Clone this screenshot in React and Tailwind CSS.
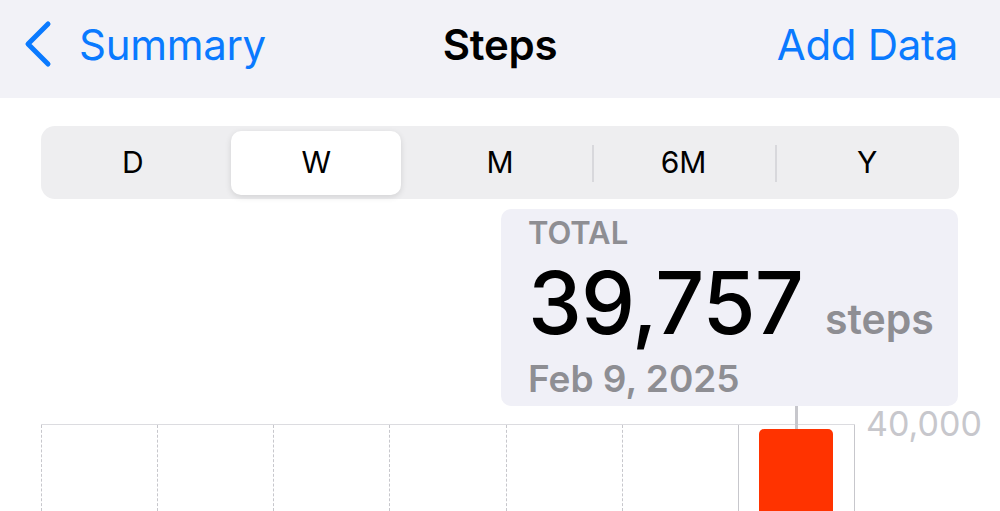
const tabs = ["D", "W", "M", "6M", "Y"]

function App(){
    const days = [0, 1, 2, 3, 4, 5, 6]

    return(
        <div className="w-[1000px] h-[511px] overflow-hidden bg-white flex flex-col" style={{fontFamily: "Inter, 'Liberation Sans', sans-serif"}}>
            {/* Nav bar */}
            <div className="h-[98px] shrink-0 bg-[#f2f2f7] flex items-center pl-[20px] pr-[42px] pb-[10px]">
                <div className="flex items-center text-[#0a7aff] w-[311px]">
                    <svg width="34" height="48" viewBox="0 0 34 48" className="shrink-0">
                        <path d="M28 4 L8 24 L28 44" fill="none" stroke="#0a7aff" strokeWidth="5" strokeLinecap="round" strokeLinejoin="round" />
                    </svg>
                    <span className="text-[42px] ml-[25px] tracking-[-0.3px]">Summary</span>
                </div>
                <div className="flex-1 text-center text-[42px] font-semibold text-black tracking-[-0.3px]">Steps</div>
                <div className="w-[289px] text-right text-[42px] text-[#0a7aff] tracking-[-0.3px]">Add Data</div>
            </div>

            {/* Segmented control */}
            <div className="mt-[28px] mx-[41px] h-[73px] shrink-0 bg-[#eeeef0] rounded-[14px] flex items-center">
                {tabs.map((t, i) => (
                    <div key={t} className="flex-1 h-[64px] flex items-center justify-center relative">
                        {i > 2 && (
                            <div className="absolute left-0 top-[14px] w-[2px] h-[37px] bg-[#d8d8dc]"></div>
                        )}
                        <div className={"w-[170px] h-full flex items-center justify-center text-[30px] text-black rounded-[10px] " + (t === "W" ? "bg-white shadow-[0_2px_6px_rgba(0,0,0,0.12)]" : "")}>
                            {t}
                        </div>
                    </div>
                ))}
            </div>

            {/* Total card */}
            <div className="mt-[10px] ml-[501px] w-[457px] h-[197px] shrink-0 bg-[#f0f0f7] rounded-[10px] pl-[27px] pt-[6px]">
                <div className="text-[31px] font-semibold text-[#8e8e93] leading-[36px]">TOTAL</div>
                <div className="flex items-baseline">
                    <span className="text-[86px] font-medium text-black leading-[105px] tracking-[-1px]">39,757</span>
                    <span className="ml-[22px] text-[41px] font-semibold text-[#8e8e93]">steps</span>
                </div>
                <div className="text-[37px] font-semibold text-[#8e8e93] leading-[45px]">Feb 9, 2025</div>
            </div>

            {/* Chart */}
            <div className="relative flex flex-1">
                <div className="absolute left-[795px] top-0 w-[3px] h-[23px] bg-[#c7c7cc]"></div>
                <div className="ml-[41px] w-[814px] pt-[18px]">
                    <div className="border-t border-[#dcdce0] h-full flex">
                        {days.map((d) => (
                            <div key={d} className={"flex-1 relative border-l border-[#c7c7cc] " + (d === 6 ? "border-solid border-r border-r-[#c7c7cc] border-r-dashed" : "border-dashed")}>
                                {d === 6 && (
                                    <div className="absolute left-[20px] top-[4px] w-[74px] h-[200px] bg-[#ff3300] rounded-t-[5px]"></div>
                                )}
                            </div>
                        ))}
                    </div>
                </div>
                <div className="ml-[11px] -mt-[2px] text-[34px] text-[#c7c7cc] leading-[40px]">40,000</div>
            </div>
        </div>
    )
}

export default App
